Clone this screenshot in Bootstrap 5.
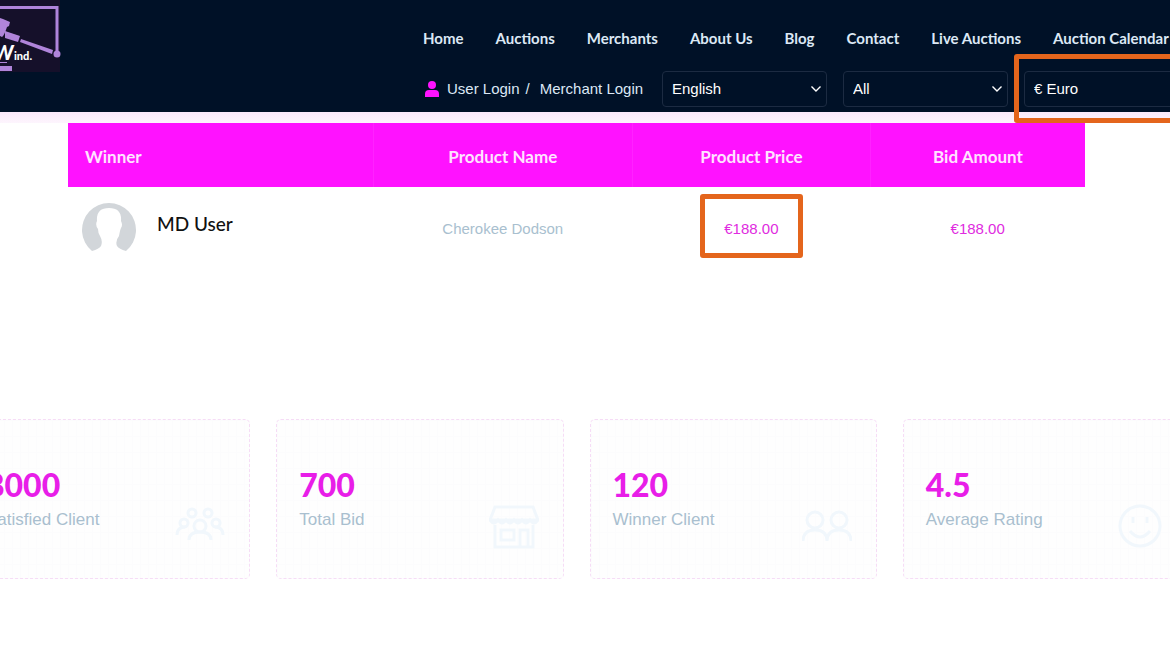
<!DOCTYPE html>
<html lang="en">
<head>
<meta charset="utf-8">
<meta name="viewport" content="width=device-width, initial-scale=1">
<title>Wind Auctions</title>
<link rel="stylesheet" href="https://cdn.jsdelivr.net/npm/bootstrap@5.3.0/dist/css/bootstrap.min.css">
<style>
:root{--pink:#ff12ff;--ink:#001127;--muted-blue:#a9bfcf;--mark:#e4651c}
body{font-family:"Liberation Sans",Arial,sans-serif;font-size:15px;background:#fff;overflow-x:hidden}
.site-header{background:var(--ink);height:112px;overflow-x:clip}
.brand-logo{width:63px;height:72px;display:block}
.header-main{margin-left:360px}
.site-nav{gap:32px;padding-top:26px;font:700 15px/24px Lato,sans-serif;white-space:nowrap}
.site-nav a{color:#dce8f5;text-decoration:none}
.tool-row{padding-top:21px;white-space:nowrap}
.tool-row a{color:#dce8f5;text-decoration:none}
.login-links{width:239px;color:#dce8f5;padding-left:2px;font-size:15px}
.login-links .divider{margin:0 10px 0 6px}
.form-select.picker{width:165px;height:36px;background-color:var(--ink);border-color:#1c2b42;border-radius:4px;color:#fff;font-size:15px;padding:0 30px 0 9px;background-position:right 4px center;background-size:12px;
background-image:url("data:image/svg+xml,%3csvg xmlns='http://www.w3.org/2000/svg' viewBox='0 0 12 12'%3e%3cpath fill='none' stroke='%23fff' stroke-width='1.4' d='m1.5 3.500 4.500 4.500 4.500-4.500'/%3e%3c/svg%3e")}
.callout{position:absolute;border:5px solid var(--mark);border-radius:3px;pointer-events:none}
.callout-currency{inset:-17px -20px -16px -10px}
.callout-price{inset:-24px -24px -18px}
.strip{height:11px;background:linear-gradient(#fae9fb,#fdf5fd)}
.winners-wrap{margin:0 85px 0 68px}
.winners{table-layout:fixed;width:100%;margin:0}
.winners th{background:var(--pink);color:#ffe3ff;height:64px;font:700 17px/24px Lato,sans-serif;padding:4px 17px 0;text-align:center;vertical-align:middle;border-left:1px solid #ff22ff}
.winners th:first-child{text-align:left;width:30%;border:0}
.winners th:nth-child(2){width:25.5%}
.winners th:nth-child(3){width:23.4%}
.winners td{height:84px;text-align:center;vertical-align:middle;color:var(--muted-blue);padding:0}
.winners td:first-child{padding:0 0 3px 13px}
.winners td.price{color:#e02be0}
.user-name{font:500 19px/24px Lato,sans-serif;color:#111;padding-bottom:8px}
.stats{display:grid;grid-template-columns:repeat(4,1fr);gap:26px;margin:148px -20px 80px -37px}
.stat-box{height:160px;border:1px dashed #f6dcf6;border-radius:5px;padding:45px 24px 0 22px;background:repeating-linear-gradient(90deg,#fcfcfd 0 1px,#0000 1px 8px),repeating-linear-gradient(#fcfcfd 0 1px,#0000 1px 16px),#fefefe}
.stat-num{font:900 32px/40px Lato,sans-serif;color:#e81ee8}
.stat-label{font-size:17px;line-height:24px;color:var(--muted-blue);margin-top:3px}
.stat-icon{width:50px;height:46px;fill:none;stroke:#f1f7fc;stroke-width:3}
.stat-icon.mt-auto{margin-bottom:28px}
</style>
</head>
<body>
<div class="overflow-hidden">
<header class="site-header d-flex">
  <a href="#" aria-label="Wind home" class="flex-shrink-0"><svg class="brand-logo" viewBox="0 0 63 72">
    <path fill="#15102a" d="M0 0h60v72H0z"/>
    <path d="M0 7.500h57v44" fill="none" stroke="#b084da" stroke-width="3"/>
    <g fill="#b084da"><path d="M0 18l3 1 7 3-1 4-2 1q-3 9-5 10l-2-1z"/><path d="m5 31 15 5-2 6-13-4zM21 39l32 11-1 4-32-12z"/><circle cx="57" cy="54" r="3.500"/><path d="M0 62h7v1H0zM0 66h12v5H0z"/></g>
    <g fill="#fff" font-family="Lato, sans-serif" font-weight="900"><text x="-6" y="60" font-size="20" font-style="italic">W</text><text x="14" y="60" font-size="11">ind.</text></g>
  </svg></a>
  <div class="header-main flex-shrink-0">
    <nav class="site-nav d-flex"><a href="#">Home</a><a href="#">Auctions</a><a href="#">Merchants</a><a href="#">About Us</a><a href="#">Blog</a><a href="#">Contact</a><a href="#">Live Auctions</a><a href="#">Auction Calendar</a></nav>
    <div class="tool-row d-flex align-items-center">
      <div class="login-links d-flex align-items-center">
        <svg width="14" height="16" viewBox="0 0 14 16" fill="#ff12ff" class="me-2"><circle cx="7" cy="4" r="4"/><path d="M0 16v-3q0-4 4-4h6q4 0 4 4v3z"/></svg>
        <a href="#">User Login</a><span class="divider">/</span><a href="#">Merchant Login</a>
      </div>
      <div class="d-flex gap-3">
        <select class="form-select picker" aria-label="Language"><option>English</option></select>
        <select class="form-select picker" aria-label="Category"><option>All</option></select>
        <div class="position-relative"><select class="form-select picker" aria-label="Currency"><option>€ Euro</option></select><span class="callout callout-currency"></span></div>
      </div>
    </div>
  </div>
</header>
<div class="strip"></div>
<main>
  <div class="winners-wrap">
    <table class="winners">
      <thead><tr><th>Winner</th><th>Product Name</th><th>Product Price</th><th>Bid Amount</th></tr></thead>
      <tbody><tr>
        <td><div class="d-flex align-items-center">
          <svg width="56" height="52" viewBox="0 0 56 52" class="flex-shrink-0 me-3"><path fill="#d2d6da" fill-rule="evenodd" d="M11 49A27 27 0 1 1 45 49Q38 47 36 44Q34 39 38 34Q39 28 40 26Q42 23 40 19Q41 6 28 6Q15 6 16 19Q14 23 17 27Q17 31 19 34Q22 39 20 44Q18 47 11 49Z"/></svg>
          <span class="user-name ms-1">MD User</span></div></td>
        <td>Cherokee Dodson</td>
        <td class="price"><span class="position-relative d-inline-block">€188.00<span class="callout callout-price"></span></span></td>
        <td class="price">€188.00</td>
      </tr></tbody>
    </table>
  </div>
  <section class="stats">
    <div class="stat-box d-flex justify-content-between"><div><div class="stat-num">8000</div><div class="stat-label">Satisfied Client</div></div>
      <svg class="stat-icon mt-auto" viewBox="0 0 50 46"><circle cx="25" cy="22" r="6"/><circle cx="17" cy="9" r="4"/><circle cx="33" cy="9" r="4"/><circle cx="9" cy="19" r="4"/><circle cx="41" cy="19" r="4"/><path d="M14 36q0-8 11-8t11 8M2 31q0-8 8-8M48 31q0-8-8-8"/></svg></div>
    <div class="stat-box d-flex justify-content-between"><div><div class="stat-num">700</div><div class="stat-label">Total Bid</div></div>
      <svg class="stat-icon mt-auto" viewBox="0 0 50 46"><path d="M6 3h38l5 13q-4 6-8 0-4 6-8 0-4 6-8 0-4 6-8 0-4 6-8 0-4 6-8 0zM1 16h48M6 21v22h38V21M12 26h13v10H12zM31 43V26h8v17"/></svg></div>
    <div class="stat-box d-flex justify-content-between"><div><div class="stat-num">120</div><div class="stat-label">Winner Client</div></div>
      <svg class="stat-icon mt-auto" viewBox="0 0 50 46"><circle cx="13" cy="16" r="8"/><circle cx="37" cy="16" r="8"/><path d="M1 37q0-11 12-11t12 11q0-11 12-11t12 11"/></svg></div>
    <div class="stat-box d-flex justify-content-between"><div><div class="stat-num">4.5</div><div class="stat-label">Average Rating</div></div>
      <svg class="stat-icon mt-auto" viewBox="0 0 50 46"><circle cx="25" cy="22" r="20"/><path d="M18 13v6M32 13v6M15 27q10 12 20 0"/></svg></div>
  </section>
</main>
</div>
<script src="https://cdn.jsdelivr.net/npm/bootstrap@5.3.0/dist/js/bootstrap.bundle.min.js"></script>
</body>
</html>
